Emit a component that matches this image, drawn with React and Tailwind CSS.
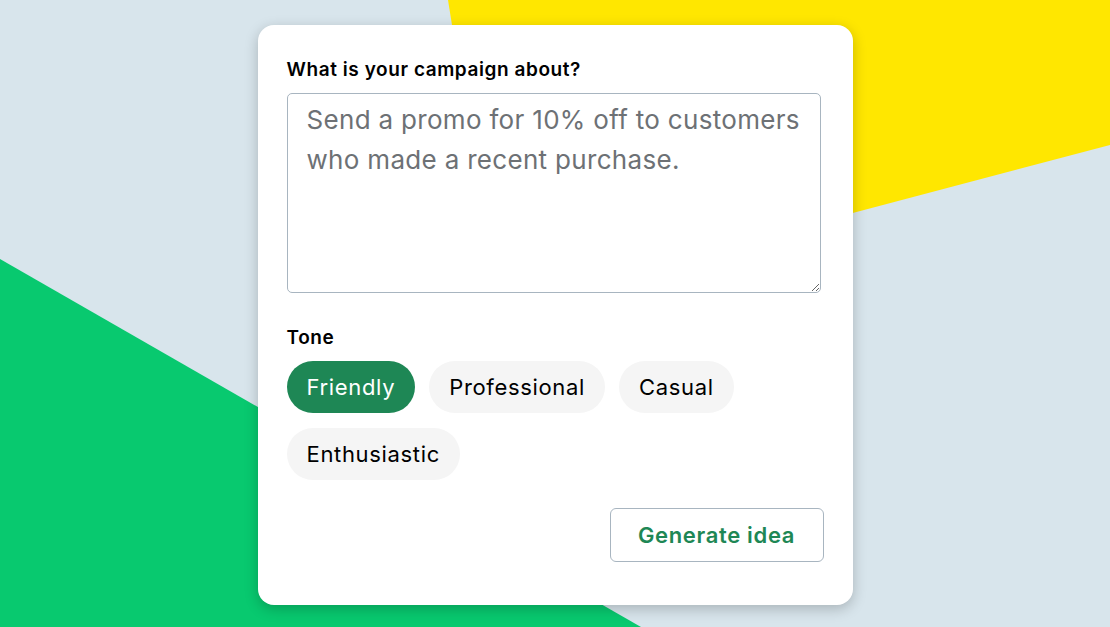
import { useState } from 'react';

const tones = ['Friendly', 'Professional', 'Casual', 'Enthusiastic'];

const Backdrop = () => (
  <svg className="absolute inset-0 h-full w-full" viewBox="0 0 1110 627" preserveAspectRatio="none">
    <polygon points="448,0 1110,0 1110,145 497,307" fill="#ffe700" />
    <polygon points="0,259 641,627 0,627" fill="#08c96f" />
  </svg>
);

const App = () => {
  const [tone, setTone] = useState('Friendly');

  return (
    <div className="relative h-[627px] w-full overflow-hidden bg-[#d8e5ec] font-['Inter',sans-serif]">
      <Backdrop />
      <div className="relative flex justify-center pt-[25px]">
        <div className="flex h-[580px] w-[595px] flex-col rounded-[16px] bg-white px-[29px] pt-[32px] shadow-[0_4px_14px_rgba(0,0,0,0.22)]">
          <label className="text-[19px] font-semibold leading-[26px] tracking-[0.03em] text-black">
            What is your campaign about?
          </label>
          <textarea
            className="mt-[10px] h-[200px] w-[534px] rounded-[5px] border border-[#a8b5c0] px-[19px] pt-[6px] text-[26px] leading-[40px] tracking-[0.012em] text-black outline-none placeholder:text-[#6d7175]"
            placeholder="Send a promo for 10% off to customers who made a recent purchase."
          />
          <div className="mt-[32px] text-[19px] font-semibold leading-[26px] tracking-[0.03em] text-black">Tone</div>
          <div className="mt-[10px] flex w-[480px] flex-wrap gap-x-[14px] gap-y-[15px]">
            {tones.map((t) => (
              <button
                key={t}
                onClick={() => setTone(t)}
                className={
                  t === tone
                    ? 'h-[52px] rounded-full bg-[#1e8755] px-[20px] text-[22px] tracking-[0.03em] text-white'
                    : 'h-[52px] rounded-full bg-[#f5f5f5] px-[20px] text-[22px] tracking-[0.03em] text-black'
                }
              >
                {t}
              </button>
            ))}
          </div>
          <div className="mt-[28px] flex w-[537px] justify-end">
            <button className="h-[54px] w-[214px] rounded-[6px] border border-[#a8b5c0] text-[22px] font-semibold tracking-[0.03em] text-[#1e8755]">
              Generate idea
            </button>
          </div>
        </div>
      </div>
    </div>
  );
};

export default App;
